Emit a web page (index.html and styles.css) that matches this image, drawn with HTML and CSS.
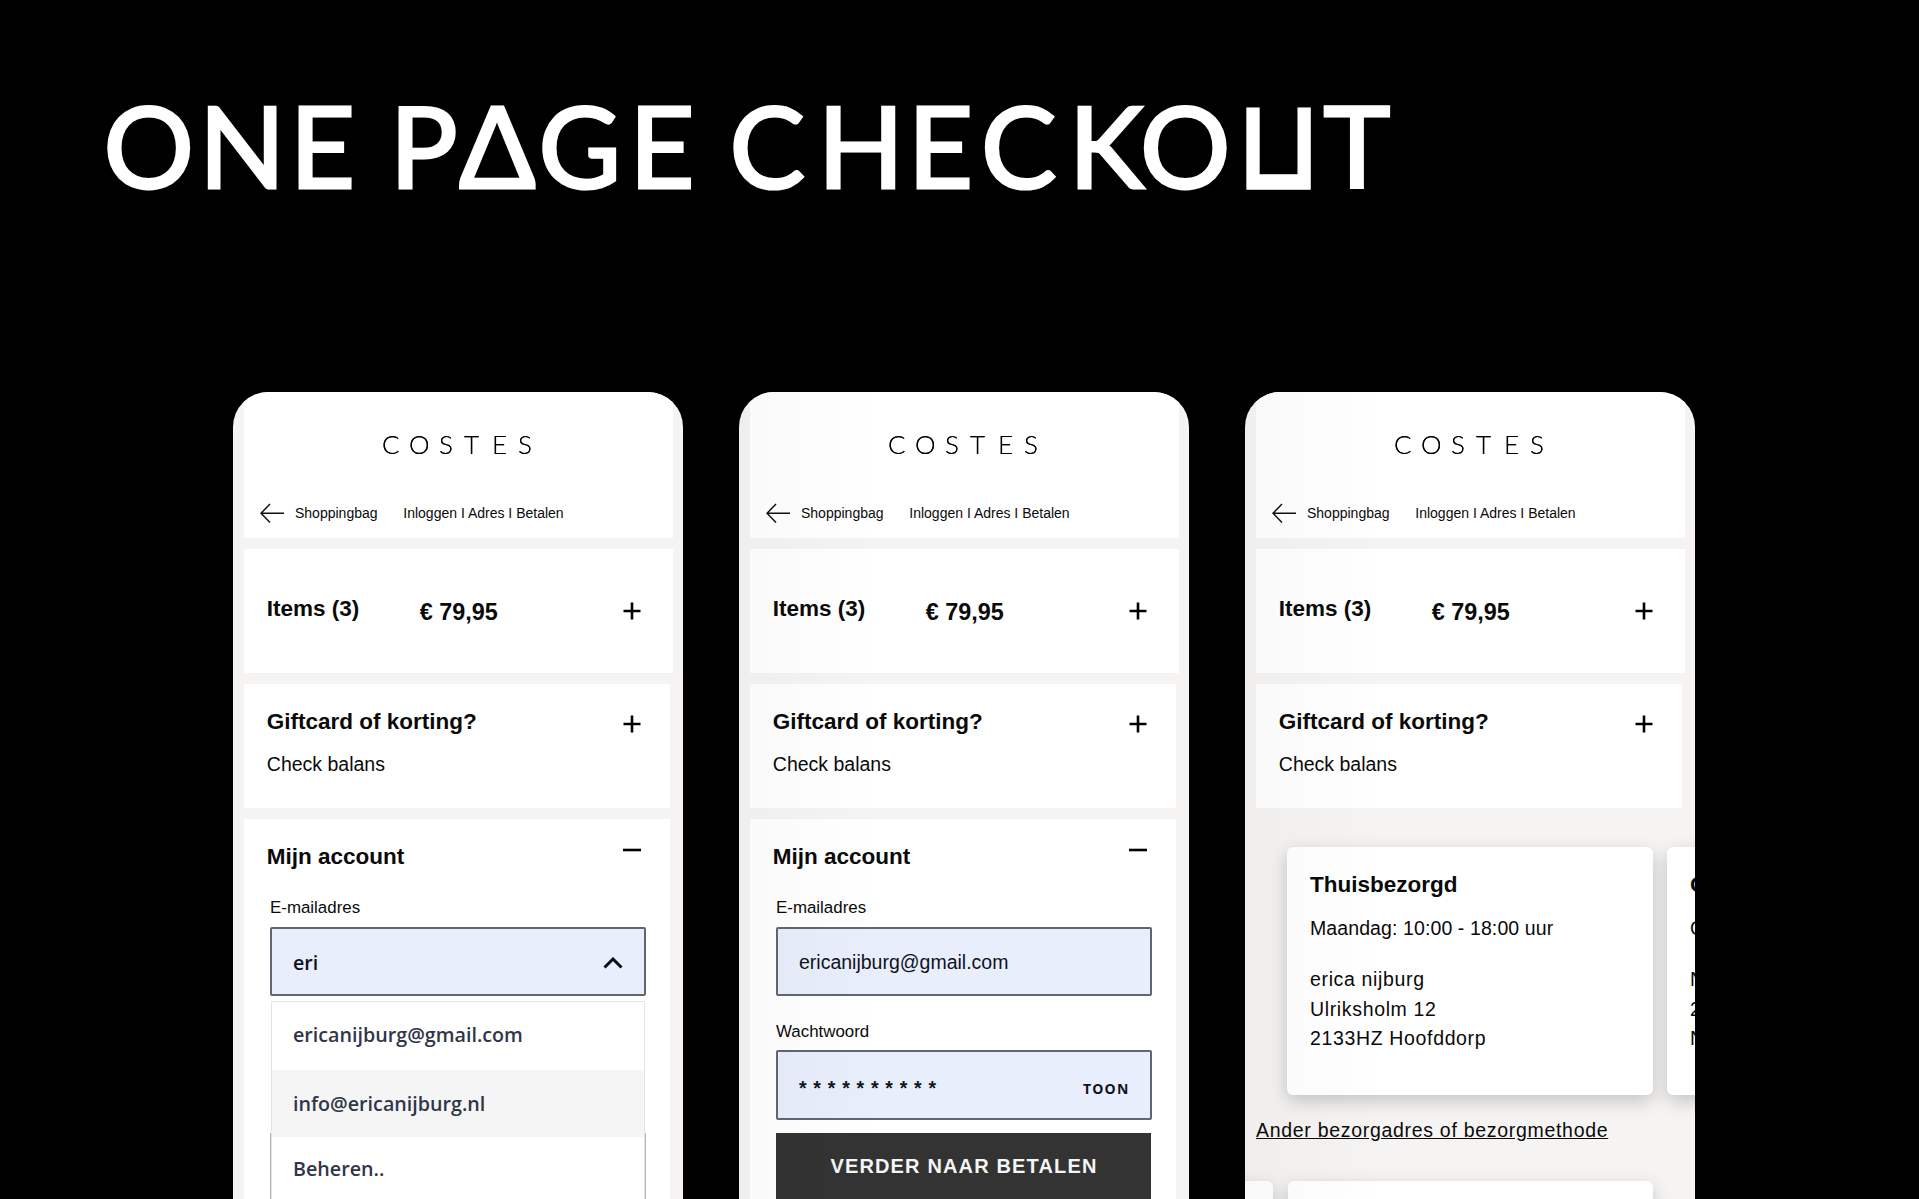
FILE: index.html
```
<!DOCTYPE html>
<html lang="nl">
<head>
    <meta charset="UTF-8">
    <meta name="viewport" content="width=device-width, initial-scale=1">
    <title>One page checkout</title>
    <link rel="stylesheet" href="styles.css">
</head>
<body>

<h1 class="title">
    <svg width="1919" height="220" viewBox="0 0 1919 220">
        <text class="title-text" y="188.2" x="103.5 199 289.7">ONE</text>
        <text class="title-text" y="188.2" x="389.7 459 538.5 629.3">PΔGE</text>
        <text class="title-text" y="188.2" x="729.5 817.7 907.7 981 1068.7 1140">CHECKO</text>
        <text class="title-square" transform="translate(1237.4 187) scale(.9 1.05)">⊔</text>
        <text class="title-text" y="188.2" x="1323.5">T</text>
    </svg>
</h1>

<main class="phones">

    <!-- Scherm 1: e-mail met suggesties -->
    <section class="phone">
        <header class="panel top">
            <svg class="logo" width="429" height="111" viewBox="0 0 429 111">
                <text y="62" x="138 165 195 220 248 274">COSTES</text>
            </svg>
            <nav class="steps">
                <svg width="24" height="20" viewBox="0 0 24 20"><path d="M10 1L1 10.3L10 19.5M1 10.3H24"/></svg>
                <span class="back">Shoppingbag</span>
                <span>Inloggen I Adres I Betalen</span>
            </nav>
        </header>
        <div class="panel items">
            <h2>Items (3)</h2>
            <strong class="price">€ 79,95</strong>
            <svg class="icon" width="18" height="18" viewBox="0 0 18 18"><path d="M.5 9H17.5M9 .5V17.5"/></svg>
        </div>
        <div class="panel narrow gift">
            <div class="head">
                <h2>Giftcard of korting?</h2>
                <svg class="icon" width="18" height="18" viewBox="0 0 18 18"><path d="M.5 9H17.5M9 .5V17.5"/></svg>
            </div>
            <p>Check balans</p>
        </div>
        <div class="panel narrow account">
            <div class="head">
                <h2>Mijn account</h2>
                <svg class="icon minus" width="18" height="18" viewBox="0 0 18 18"><path d="M0 9H18"/></svg>
            </div>
            <div class="form">
                <label>E-mailadres</label>
                <div class="input typed">
                    <span>eri</span>
                    <svg width="20" height="12" viewBox="0 0 20 12"><path d="M1.5 10.5L10 2L18.5 10.5"/></svg>
                </div>
                <div class="suggest">
                    <div class="behind"></div>
                    <ul class="menu">
                        <li>ericanijburg@gmail.com</li>
                        <li class="active">info@ericanijburg.nl</li>
                        <li class="last">Beheren..</li>
                    </ul>
                </div>
            </div>
        </div>
    </section>

    <!-- Scherm 2: wachtwoord -->
    <section class="phone shaded">
        <header class="panel top">
            <svg class="logo" width="429" height="111" viewBox="0 0 429 111">
                <text y="62" x="138 165 195 220 248 274">COSTES</text>
            </svg>
            <nav class="steps">
                <svg width="24" height="20" viewBox="0 0 24 20"><path d="M10 1L1 10.3L10 19.5M1 10.3H24"/></svg>
                <span class="back">Shoppingbag</span>
                <span>Inloggen I Adres I Betalen</span>
            </nav>
        </header>
        <div class="panel items">
            <h2>Items (3)</h2>
            <strong class="price">€ 79,95</strong>
            <svg class="icon" width="18" height="18" viewBox="0 0 18 18"><path d="M.5 9H17.5M9 .5V17.5"/></svg>
        </div>
        <div class="panel narrow gift">
            <div class="head">
                <h2>Giftcard of korting?</h2>
                <svg class="icon" width="18" height="18" viewBox="0 0 18 18"><path d="M.5 9H17.5M9 .5V17.5"/></svg>
            </div>
            <p>Check balans</p>
        </div>
        <div class="panel narrow account">
            <div class="head">
                <h2>Mijn account</h2>
                <svg class="icon minus" width="18" height="18" viewBox="0 0 18 18"><path d="M0 9H18"/></svg>
            </div>
            <div class="form">
                <label>E-mailadres</label>
                <div class="input"><span>ericanijburg@gmail.com</span></div>
                <label class="second">Wachtwoord</label>
                <div class="input password">
                    <span class="stars">**********</span>
                    <span class="toon">TOON</span>
                </div>
                <div class="button">VERDER NAAR BETALEN</div>
            </div>
        </div>
    </section>

    <!-- Scherm 3: bezorging -->
    <section class="phone shaded">
        <header class="panel top">
            <svg class="logo" width="429" height="111" viewBox="0 0 429 111">
                <text y="62" x="138 165 195 220 248 274">COSTES</text>
            </svg>
            <nav class="steps">
                <svg width="24" height="20" viewBox="0 0 24 20"><path d="M10 1L1 10.3L10 19.5M1 10.3H24"/></svg>
                <span class="back">Shoppingbag</span>
                <span>Inloggen I Adres I Betalen</span>
            </nav>
        </header>
        <div class="panel items">
            <h2>Items (3)</h2>
            <strong class="price">€ 79,95</strong>
            <svg class="icon" width="18" height="18" viewBox="0 0 18 18"><path d="M.5 9H17.5M9 .5V17.5"/></svg>
        </div>
        <div class="panel narrow gift">
            <div class="head">
                <h2>Giftcard of korting?</h2>
                <svg class="icon" width="18" height="18" viewBox="0 0 18 18"><path d="M.5 9H17.5M9 .5V17.5"/></svg>
            </div>
            <p>Check balans</p>
        </div>
        <div class="cards">
            <div class="card">
                <h2>Thuisbezorgd</h2>
                <p class="when">Maandag: 10:00 - 18:00 uur</p>
                <address>erica nijburg<br>Ulriksholm 12<br>2133HZ Hoofddorp</address>
            </div>
            <div class="card">
                <h2>O</h2>
                <p class="when">O</p>
                <address>N<br>2<br>N</address>
            </div>
        </div>
        <a class="other">Ander bezorgadres of bezorgmethode</a>
        <div class="cards lower">
            <div class="card"></div>
            <div class="card"></div>
        </div>
    </section>

</main>

</body>
</html>
```

FILE: styles.css
```
* {
    box-sizing: border-box;
}

body {
    margin: 0;
    height: 1199px;
    overflow: hidden;
    background-color: #000;
    color: #0a0a0a;
    font-family: "Liberation Sans", Arial, sans-serif;
    font-size: 19.5px;
}

h1, h2, p, ul {
    margin: 0;
    padding: 0;
}

svg {
    display: block;
    flex: none;
}

.title {
    height: 392px;
}

.title text {
    fill: #fff;
    stroke: #fff;
    font-weight: 400;
}

.title-text {
    font-family: Lato, sans-serif;
    font-size: 113px;
    stroke-width: 3px;
}

.title-square {
    font-family: "DejaVu Sans", sans-serif;
    font-size: 117px;
    stroke-width: 5px;
}

.phones {
    display: flex;
    gap: 56px;
    padding-left: 233px;
}

.phone {
    position: relative;
    flex: none;
    width: 450px;
    height: 807px;
    padding: 0 10px 0 11px;
    border-radius: 35px 35px 0 0;
    background-color: #f5f4f3;
    overflow: hidden;
}

/* zachte schaduw langs de linkerkant */
.shaded::after {
    content: "";
    position: absolute;
    inset: 0;
    background: linear-gradient(to right, rgba(0, 0, 0, 0.025), rgba(0, 0, 0, 0) 32%);
    pointer-events: none;
}

.panel {
    width: 428.5px;
    margin-bottom: 11px;
    padding-left: 22.8px;
    background-color: #fff;
}

.narrow {
    width: 426px;
}

.top {
    height: 146px;
    padding-left: 0;
}

/* alleen de verticale halen van het logo worden dikker */
.logo {
    filter: drop-shadow(0.9px 0 0 #222);
}

.logo text {
    font-family: Lato, sans-serif;
    font-weight: 300;
    font-size: 26px;
}

.steps {
    display: flex;
    padding-left: 16px;
    font-size: 14px;
    line-height: 20px;
    white-space: nowrap;
}

.steps path {
    fill: none;
    stroke: #111;
    stroke-width: 1.5;
}

.back {
    width: 108.3px;
    margin-left: 11px;
}

h2, .price {
    font-size: 22.5px;
    font-weight: bold;
    line-height: 28px;
    white-space: nowrap;
}

.items {
    display: flex;
    height: 124px;
    padding-top: 46px;
}

.items h2 {
    width: 153px;
}

.price {
    margin-top: 2.5px;
    font-size: 23.4px;
}

.icon {
    margin: 7px 31.5px 0 auto;
}

.narrow .icon {
    margin-right: 29px;
}

.icon path {
    fill: none;
    stroke: #000;
    stroke-width: 2.6;
}

.account .minus {
    margin-top: -1.5px;
}

.head {
    display: flex;
}

.gift {
    height: 124px;
    padding-top: 23.5px;
}

.gift p {
    margin-top: 16px;
    line-height: 24px;
}

.account {
    height: 400px;
    padding-top: 23.5px;
}

.form {
    width: 376.5px;
    margin: 27.4px 0 0 3.2px;
}

label {
    display: block;
    margin-bottom: 8.7px;
    font-size: 16.9px;
    line-height: 20px;
}

.second {
    margin-top: 25.5px;
}

.input {
    display: flex;
    align-items: center;
    justify-content: space-between;
    height: 69.5px;
    padding: 3px 21px 0;
    border: 2px solid #62666f;
    border-radius: 2px;
    background-color: #e8eefc;
    color: #10131c;
}

.typed, .menu {
    font-family: "Open Sans", sans-serif;
    font-weight: 600;
    font-size: 19.7px;
}

.typed path {
    fill: none;
    stroke: #0a0f1c;
    stroke-width: 3;
}

.password {
    padding-top: 6px;
}

.suggest {
    position: relative;
    margin-top: 5px;
}

/* het veld dat onder het menu doorloopt */
.behind {
    position: absolute;
    top: 132px;
    left: 0;
    right: 0;
    height: 100px;
    border: 1px solid #b5b5b8;
}

.menu {
    position: relative;
    margin: 0 1px;
    list-style: none;
    border: 1px solid #e2e4e7;
    background-color: #fff;
    color: #30364a;
}

.menu li {
    height: 67.5px;
    padding-left: 21px;
    line-height: 65px;
}

.menu .active {
    background-color: #f5f5f5;
    line-height: 67px;
}

.menu .last {
    line-height: 63px;
}

.stars {
    font-weight: bold;
    letter-spacing: 6.8px;
}

.toon {
    font-family: "Open Sans", sans-serif;
    font-weight: 700;
    font-size: 14px;
    letter-spacing: 1.2px;
}

.button {
    height: 80px;
    margin: 13px 1px 0 0.5px;
    background-color: #333;
    color: #f5f5f5;
    font-size: 20px;
    font-weight: bold;
    line-height: 67px;
    letter-spacing: 1.15px;
    text-align: center;
}

.cards {
    display: flex;
    gap: 14.5px;
    margin: 39px 0 0 31px;
}

.card {
    flex: none;
    width: 365.5px;
    height: 247.5px;
    padding: 24px 0 0 23px;
    border-radius: 6px;
    background-color: #fff;
    box-shadow: 0 6px 18px rgba(0, 0, 0, 0.2);
}

.when {
    margin-top: 16.5px;
    line-height: 24px;
    letter-spacing: 0.1px;
}

address {
    margin-top: 25.8px;
    font-style: normal;
    line-height: 29.5px;
    letter-spacing: 0.65px;
}

.other {
    display: block;
    margin-top: 23.7px;
    line-height: 24px;
    letter-spacing: 0.7px;
    text-decoration: underline;
    white-space: nowrap;
}

.lower {
    margin: 38.8px 0 0 -348.5px;
}
```
